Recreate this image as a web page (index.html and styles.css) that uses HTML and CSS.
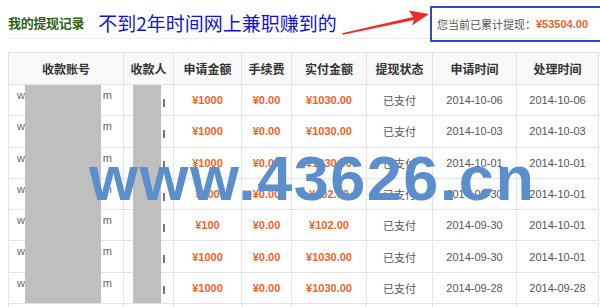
FILE: index.html
```html
<!DOCTYPE html>
<html lang="zh-CN">
<head>
<meta charset="utf-8">
<title>我的提现记录</title>
<link rel="stylesheet" href="styles.css">
</head>
<body>
<div class="page">
  <div class="head">
    <h1 class="title">我的提现记录</h1>
    <span class="slogan">不到2年时间网上兼职赚到的</span>
  </div>
  <svg class="arrow" width="600" height="45" viewBox="0 0 600 45" aria-hidden="true">
    <polygon points="342,33.2 413,17 409,10.5 429,14 412,25.5 414,20 343,34.8" fill="#ee2b2b"/>
  </svg>
  <div class="total">您当前已累计提现：<b class="amt">¥53504.00</b></div>

  <div class="tablewrap">
    <table class="list">
      <thead>
        <tr>
          <th class="c1">收款账号</th><th class="c2">收款人</th><th class="c3">申请金额</th><th class="c4">手续费</th><th class="c5">实付金额</th><th class="c6">提现状态</th><th class="c7">申请时间</th><th class="c8">处理时间</th>
        </tr>
      </thead>
      <tbody>
        <tr><td class="acct"><span>w</span><span>m</span></td><td class="payee"><i></i></td><td class="money">¥1000</td><td class="money">¥0.00</td><td class="money">¥1030.00</td><td>已支付</td><td>2014-10-06</td><td>2014-10-06</td></tr>
        <tr><td class="acct"><span>w</span><span>m</span></td><td class="payee"><i></i></td><td class="money">¥1000</td><td class="money">¥0.00</td><td class="money">¥1030.00</td><td>已支付</td><td>2014-10-03</td><td>2014-10-03</td></tr>
        <tr><td class="acct"><span>w</span><span>m</span></td><td class="payee"><i></i></td><td class="money">¥1000</td><td class="money">¥0.00</td><td class="money">¥1030.00</td><td>已支付</td><td>2014-10-01</td><td>2014-10-01</td></tr>
        <tr><td class="acct"><span>w</span><span>m</span></td><td class="payee"><i></i></td><td class="money">¥100</td><td class="money">¥0.00</td><td class="money">¥102.00</td><td>已支付</td><td>2014-09-30</td><td>2014-10-01</td></tr>
        <tr><td class="acct"><span>w</span><span>m</span></td><td class="payee"><i></i></td><td class="money">¥100</td><td class="money">¥0.00</td><td class="money">¥102.00</td><td>已支付</td><td>2014-09-30</td><td>2014-10-01</td></tr>
        <tr><td class="acct"><span>w</span><span>m</span></td><td class="payee"><i></i></td><td class="money">¥1000</td><td class="money">¥0.00</td><td class="money">¥1030.00</td><td>已支付</td><td>2014-09-30</td><td>2014-10-01</td></tr>
        <tr><td class="acct"><span>w</span><span>m</span></td><td class="payee"><i></i></td><td class="money">¥1000</td><td class="money">¥0.00</td><td class="money">¥1030.00</td><td>已支付</td><td>2014-09-28</td><td>2014-09-28</td></tr>
        <tr><td></td><td></td><td></td><td></td><td></td><td></td><td></td><td></td></tr>
      </tbody>
    </table>
    <div class="redact r1"></div>
    <div class="redact r2"></div>
  </div>

  <div class="watermark">www.43626.cn</div>
</div>
</body>
</html>
```
FILE: styles.css
```css
html, body {
  margin: 0;
  padding: 0;
  background: #fff;
}
.page {
  position: relative;
  width: 600px;
  height: 307px;
  overflow: hidden;
  font-family: "Liberation Sans", Arial, "Noto Sans CJK SC", sans-serif;
}
.head {
  display: flex;
  align-items: center;
  height: 31px;
  padding-top: 7px;
  margin: 0 10px 0 8px;
  border-bottom: 1px solid #ececec;
}
.title {
  margin: 0;
  font-family: "Noto Sans CJK SC", sans-serif;
  font-size: 13px;
  font-weight: 700;
  color: #2f6114;
  letter-spacing: -0.3px;
}
.slogan {
  margin-left: 14px;
  font-family: "Noto Sans CJK SC", sans-serif;
  font-size: 19px;
  color: #1414c8;
  line-height: 1;
}
.arrow {
  position: absolute;
  left: 0;
  top: 0;
}
.total {
  position: absolute;
  left: 430px;
  top: 6px;
  width: 163px;
  height: 31px;
  border: 2px solid #2c4fc6;
  padding-left: 5px;
  box-sizing: content-box;
  display: flex;
  align-items: center;
  padding-bottom: 1px;
  font-family: "Noto Sans CJK SC", sans-serif;
  font-size: 11px;
  color: #555;
  white-space: nowrap;
}
.total .amt {
  color: #f0622a;
  font-family: "Liberation Sans", Arial, sans-serif;
  font-size: 11px;
  font-weight: 700;
}
.tablewrap {
  position: relative;
  margin: 13px 0 0 8px;
  width: 582px;
}
.list {
  border-collapse: collapse;
  width: 582px;
  table-layout: fixed;
}
.list th,
.list td {
  border: 1px solid #e3e3e3;
  padding: 0;
  text-align: center;
  white-space: nowrap;
}
.list th {
  height: 31px;
  background: #f9f9f9;
  font-family: "Noto Sans CJK SC", sans-serif;
  font-size: 12px;
  font-weight: 700;
  color: #333;
}
.list td {
  height: 30.3px;
  font-size: 11px;
  color: #555;
  font-family: "Liberation Sans", Arial, "Noto Sans CJK SC", sans-serif;
}
.c1 { width: 114px; }
.c2 { width: 49px; }
.c3 { width: 67px; }
.c4 { width: 49px; }
.c5 { width: 74px; }
.c6 { width: 65px; }
.c7 { width: 83px; }
.c8 { width: 81px; }
.list td.money {
  color: #f0622a;
  font-weight: 700;
}
.list td.acct {
  vertical-align: top;
  color: #666;
}
.acct span {
  display: inline-block;
  margin-top: 4px;
}
.acct span:first-child {
  float: left;
  margin-left: 8px;
}
.acct span:last-child {
  float: right;
  margin-right: 11px;
}
.payee {
  position: relative;
}
.payee i {
  display: inline-block;
  width: 2px;
  height: 8px;
  background: #777;
  margin-left: 31px;
  margin-top: 4px;
  vertical-align: middle;
}
.redact {
  position: absolute;
  top: 33px;
  height: 218px;
  background: #bfbfbf;
}
.r1 { left: 17px; width: 76px; }
.r2 { left: 125px; width: 28px; }
.watermark {
  position: absolute;
  left: 89px;
  top: 147px;
  font-family: "Liberation Sans", Arial, sans-serif;
  font-weight: 700;
  font-size: 63px;
  line-height: 63px;
  letter-spacing: 1.5px;
  color: #5b8fcb;
  white-space: nowrap;
}
```
